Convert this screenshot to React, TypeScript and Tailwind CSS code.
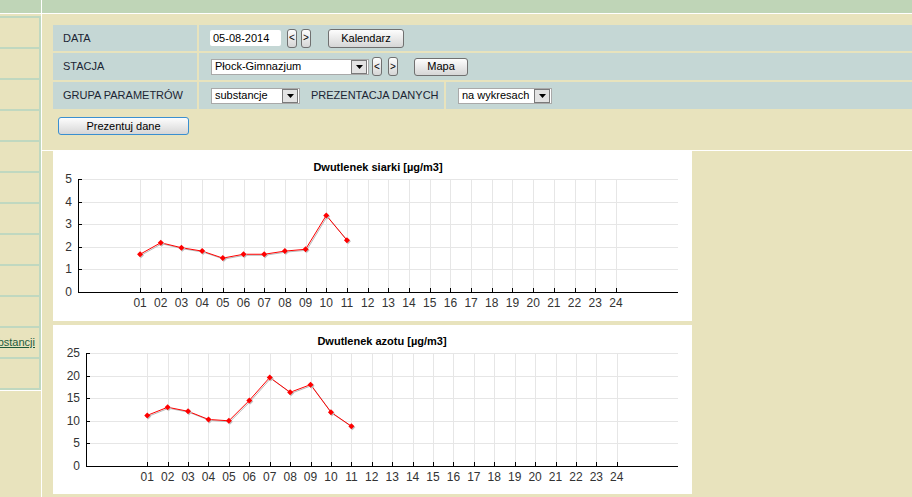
import type { ReactNode } from "react";

const SIDEBAR_CELLS = 12;

const SO2 = [1.67, 2.18, 1.96, 1.81, 1.5, 1.67, 1.67, 1.81, 1.89, 3.39, 2.29];
const NO2 = [11.2, 13.0, 12.1, 10.3, 10.0, 14.5, 19.6, 16.3, 18.0, 11.9, 8.8];

function Btn({ children, className }: { children: ReactNode; className: string }) {
  return (
    <button
      className={`flex shrink-0 items-center justify-center rounded-[3px] border border-[#707070] bg-linear-to-b from-[#fdfdfd] to-[#d6d6d6] leading-none text-black ${className}`}
    >
      {children}
    </button>
  );
}

function NavBtn({ label }: { label: string }) {
  return <Btn className="h-[19px] w-[10px] text-[10px]">{label}</Btn>;
}

function Select({ value, className }: { value: string; className: string }) {
  return (
    <div className={`flex h-[16px] shrink-0 items-center border border-[#a9a9a9] bg-white pl-[3px] pr-px text-black ${className}`}>
      <span className="flex-1 truncate leading-none">{value}</span>
      <span className="flex h-[14px] w-[16px] items-center justify-center border border-[#7a7a7a] bg-[#e3e3e3]">
        <svg width="7" height="4" viewBox="0 0 7 4">
          <polygon points="0,0 7,0 3.5,4" fill="#000" />
        </svg>
      </span>
    </div>
  );
}

interface ChartProps {
  title: string;
  max: number;
  step: number;
  left: number;
  data: number[];
  height: number;
}

function Chart({ title, max, step, left, data, height }: ChartProps) {
  const right = 625;
  const top = 28;
  const bottom = 141;
  const cw = (right - left) / 29;
  const px = (k: number) => left + (k + 2) * cw;
  const py = (v: number) => bottom - (v / max) * (bottom - top);
  const crisp = (n: number) => Math.round(n) + 0.5;
  const ticks = Array.from({ length: max / step + 1 }, (_, i) => i * step);
  const hours = Array.from({ length: 24 }, (_, i) => i + 1);
  const line = data.map((v, i) => `${px(i + 1)},${py(v)}`).join(" ");
  const shadow = data.map((v, i) => `${px(i + 1) + 1},${py(v) + 1}`).join(" ");

  return (
    <svg width={639} height={height} className="block">
      <text x={(left + right) / 2} y={20} textAnchor="middle" fontSize="11" fontWeight="bold" fill="#000">
        {title}
      </text>

      {/* grid */}
      {ticks
        .filter((v) => v > 0)
        .map((v) => (
          <line key={`h${v}`} x1={left} x2={right} y1={crisp(py(v))} y2={crisp(py(v))} stroke="#e6e6e6" />
        ))}
      {hours.map((k) => (
        <line key={`v${k}`} x1={crisp(px(k))} x2={crisp(px(k))} y1={top} y2={bottom} stroke="#e6e6e6" />
      ))}

      {/* axes */}
      <line x1={crisp(left)} x2={crisp(left)} y1={top} y2={bottom + 1} stroke="#000" />
      <line x1={left} x2={right} y1={crisp(bottom)} y2={crisp(bottom)} stroke="#000" />
      {ticks.map((v) => (
        <line key={`yt${v}`} x1={left} x2={left + 4} y1={crisp(py(v))} y2={crisp(py(v))} stroke="#000" />
      ))}
      {hours.map((k) => (
        <line key={`xt${k}`} x1={crisp(px(k))} x2={crisp(px(k))} y1={bottom - 4} y2={bottom} stroke="#000" />
      ))}

      {/* labels */}
      {ticks.map((v) => (
        <text key={`yl${v}`} x={left - 6} y={py(v) + 4} textAnchor="end" fontSize="12" fill="#333">
          {v}
        </text>
      ))}
      {hours.map((k) => (
        <text key={`xl${k}`} x={px(k)} y={156} textAnchor="middle" fontSize="12" fill="#333">
          {String(k).padStart(2, "0")}
        </text>
      ))}

      {/* series */}
      <polyline points={shadow} fill="none" stroke="#b8b8b8" strokeWidth="1" />
      <polyline points={line} fill="none" stroke="#ff0000" strokeWidth="1" />
      {data.map((v, i) => {
        const x = px(i + 1);
        const y = py(v);
        return (
          <g key={`m${i}`}>
            <polygon
              points={`${x + 1},${y - 2} ${x + 4},${y + 1} ${x + 1},${y + 4} ${x - 2},${y + 1}`}
              fill="#c0c0c0"
            />
            <polygon points={`${x},${y - 3} ${x + 3},${y} ${x},${y + 3} ${x - 3},${y}`} fill="#ff0000" />
          </g>
        );
      })}
    </svg>
  );
}

export default function App() {
  return (
    <div className="flex h-[497px] w-[912px] overflow-hidden bg-[#e8e3bd] font-['Liberation_Sans',Arial,sans-serif] text-[11px] text-[#1b2533]">
      {/* Sidebar */}
      <aside className="flex w-[41px] shrink-0 flex-col">
        <div className="h-[13px] bg-[#bfd5b7]" />
        <div className="h-px bg-white" />
        <div className="h-[2px]" />
        {Array.from({ length: SIDEBAR_CELLS }, (_, i) => (
          <div
            key={i}
            className={`flex items-center justify-end overflow-hidden border-t-2 border-r-2 border-[#c0d8c0] pr-[4px] ${
              i === SIDEBAR_CELLS - 1 ? "h-[33px] border-b-2" : "h-[31px]"
            }`}
          >
            {i === 10 && (
              <a className="whitespace-nowrap text-[#1d5a3c] underline">Wybór wg substancji</a>
            )}
          </div>
        ))}
        <div className="h-px bg-white" />
      </aside>

      <div className="w-px shrink-0 bg-white" />

      <main className="flex min-w-0 flex-1 flex-col">
        <div className="h-[13px] shrink-0 bg-[#bfd5b7]" />
        <div className="h-px shrink-0 bg-white" />

        {/* Form */}
        <div className="h-[136px] shrink-0 pl-[11px] pt-[11px]">
          <div className="flex flex-col gap-[2px]">
            <div className="flex h-[26px] gap-[2px]">
              <div className="flex w-[144px] items-center bg-[#c5d7d5] pl-[10px]">DATA</div>
              <div className="flex flex-1 items-center bg-[#c5d7d5] pl-[11px]">
                <div className="flex h-[16px] w-[71px] items-center rounded-[2px] bg-white pl-[3px] leading-none text-black">
                  05-08-2014
                </div>
                <div className="ml-[6px] flex gap-[4px]">
                  <NavBtn label="<" />
                  <NavBtn label=">" />
                </div>
                <Btn className="ml-[17px] h-[19px] w-[76px] text-[11px]">Kalendarz</Btn>
              </div>
            </div>

            <div className="flex h-[27px] gap-[2px]">
              <div className="flex w-[144px] items-center bg-[#c5d7d5] pl-[10px]">STACJA</div>
              <div className="flex flex-1 items-center bg-[#c5d7d5] pl-[12px]">
                <Select value="Płock-Gimnazjum" className="w-[158px]" />
                <div className="ml-[3px] flex gap-[6px]">
                  <NavBtn label="<" />
                  <NavBtn label=">" />
                </div>
                <Btn className="ml-[16px] h-[18px] w-[54px] text-[11px]">Mapa</Btn>
              </div>
            </div>

            <div className="flex h-[27px] gap-[2px]">
              <div className="flex w-[144px] items-center bg-[#c5d7d5] pl-[10px]">GRUPA PARAMETRÓW</div>
              <div className="flex w-[245px] items-center bg-[#c5d7d5] pl-[12px]">
                <Select value="substancje" className="w-[89px]" />
                <span className="ml-[11px]">PREZENTACJA DANYCH</span>
              </div>
              <div className="flex flex-1 items-center bg-[#c5d7d5] pl-[12px]">
                <Select value="na wykresach" className="w-[94px]" />
              </div>
            </div>
          </div>

          <button className="ml-[5px] mt-[8px] flex h-[18px] w-[131px] items-center justify-center rounded-[3px] border border-[#3a8fd0] bg-linear-to-b from-[#fdfdfd] to-[#d6d6d6] text-[11px] leading-none text-black">
            Prezentuj dane
          </button>
        </div>

        <div className="h-px shrink-0 bg-white" />

        {/* Charts */}
        <div className="flex flex-col gap-[4px] pl-[11px]">
          <div className="h-[170px] w-[639px] bg-white">
            <Chart title="Dwutlenek siarki [µg/m3]" max={5} step={1} left={25} data={SO2} height={170} />
          </div>
          <div className="h-[169px] w-[639px] bg-white">
            <Chart title="Dwutlenek azotu [µg/m3]" max={25} step={5} left={33} data={NO2} height={169} />
          </div>
        </div>
      </main>
    </div>
  );
}
